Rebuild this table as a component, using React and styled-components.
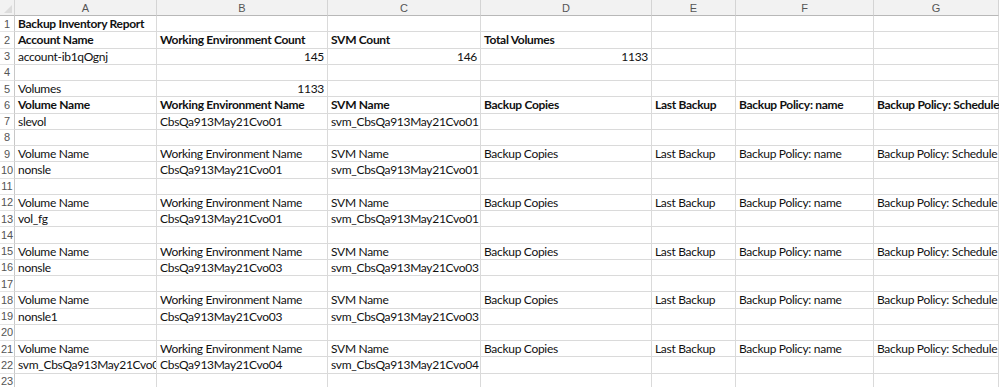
import React from 'react'
import styled, { createGlobalStyle } from 'styled-components'

const GlobalStyle = createGlobalStyle`
  html, body {
    margin: 0;
    padding: 0;
    background: #ffffff;
    overflow: hidden;
  }
`

const COLS = [15, 142, 171, 153, 171, 84, 138, 125]
const LETTERS = ['A', 'B', 'C', 'D', 'E', 'F', 'G']

const HEAD = [
  'Volume Name',
  'Working Environment Name',
  'SVM Name',
  'Backup Copies',
  'Last Backup',
  'Backup Policy: name',
  'Backup Policy: Schedule',
]

// each row: { bold, cells: [text | {text, right}] }
const rows = [
  { bold: true, cells: ['Backup Inventory Report'] },
  {
    bold: true,
    cells: ['Account Name', 'Working Environment Count', 'SVM Count', 'Total Volumes'],
  },
  {
    cells: [
      'account-ib1qOgnj',
      { text: '145', right: true },
      { text: '146', right: true },
      { text: '1133', right: true },
    ],
  },
  { cells: [] },
  { cells: ['Volumes', { text: '1133', right: true }] },
  { bold: true, cells: HEAD },
  { cells: ['slevol', 'CbsQa913May21Cvo01', 'svm_CbsQa913May21Cvo01'] },
  { cells: [] },
  { cells: HEAD },
  { cells: ['nonsle', 'CbsQa913May21Cvo01', 'svm_CbsQa913May21Cvo01'] },
  { cells: [] },
  { cells: HEAD },
  { cells: ['vol_fg', 'CbsQa913May21Cvo01', 'svm_CbsQa913May21Cvo01'] },
  { cells: [] },
  { cells: HEAD },
  { cells: ['nonsle', 'CbsQa913May21Cvo03', 'svm_CbsQa913May21Cvo03'] },
  { cells: [] },
  { cells: HEAD },
  { cells: ['nonsle1', 'CbsQa913May21Cvo03', 'svm_CbsQa913May21Cvo03'] },
  { cells: [] },
  { cells: HEAD },
  { cells: ['svm_CbsQa913May21Cvo03', 'CbsQa913May21Cvo04', 'svm_CbsQa913May21Cvo04'] },
  { cells: [] },
]

const Frame = styled.div`
  width: 999px;
  height: 387px;
  overflow: hidden;
`

const Sheet = styled.div`
  display: grid;
  grid-template-columns: ${COLS.map((c) => c + 'px').join(' ')};
  grid-template-rows: 16px;
  grid-auto-rows: 16.25px;
  font-family: Lato, 'Liberation Sans', sans-serif;
  font-size: 12px;
  letter-spacing: -0.3px;
  color: #111;
`

const Corner = styled.div`
  position: relative;
  background: #f2f2f2;
  border-right: 1px solid #d4d4d4;
  border-bottom: 1px solid #b8b8b8;
  &::after {
    content: '';
    position: absolute;
    right: 2px;
    bottom: 2px;
    border-left: 8px solid transparent;
    border-bottom: 8px solid #dcdcdc;
  }
`

const ColHead = styled.div`
  display: flex;
  align-items: center;
  justify-content: center;
  background: #f2f2f2;
  border-right: 1px solid #d4d4d4;
  border-bottom: 1px solid #b8b8b8;
  color: #555;
  font-size: 11px;
  letter-spacing: 0;
  font-family: 'Liberation Sans', Arial, sans-serif;
`

const RowNum = styled.div`
  display: flex;
  align-items: center;
  justify-content: center;
  border-right: 1px solid #c8c8c8;
  border-bottom: 1px solid #e4e4e4;
  color: #555;
  font-size: 11px;
  letter-spacing: 0;
  font-family: 'Liberation Sans', Arial, sans-serif;
  background: #ffffff;
  white-space: nowrap;
`

const Cell = styled.div`
  display: flex;
  align-items: center;
  justify-content: ${(p) => (p.$right ? 'flex-end' : 'flex-start')};
  padding: 0 3px;
  border-right: 1px solid #dadada;
  border-bottom: 1px solid #dadada;
  font-weight: ${(p) => (p.$bold ? 700 : 400)};
  white-space: nowrap;
  overflow: ${(p) => (p.$clip ? 'hidden' : 'visible')};
  min-width: 0;
`

export default function App() {
  return (
    <>
      <GlobalStyle />
      <Frame>
        <Sheet>
          <Corner />
          {LETTERS.map((l) => (
            <ColHead key={l}>{l}</ColHead>
          ))}
          {rows.map((row, r) => (
            <React.Fragment key={r}>
              <RowNum>{r + 1}</RowNum>
              {LETTERS.map((_, c) => {
                const raw = row.cells[c]
                const cell = typeof raw === 'string' ? { text: raw } : raw || { text: '' }
                const nextFilled = !!row.cells[c + 1]
                return (
                  <Cell
                    key={c}
                    $bold={row.bold}
                    $right={cell.right}
                    $clip={nextFilled || cell.right}
                  >
                    {cell.text}
                  </Cell>
                )
              })}
            </React.Fragment>
          ))}
        </Sheet>
      </Frame>
    </>
  )
}
